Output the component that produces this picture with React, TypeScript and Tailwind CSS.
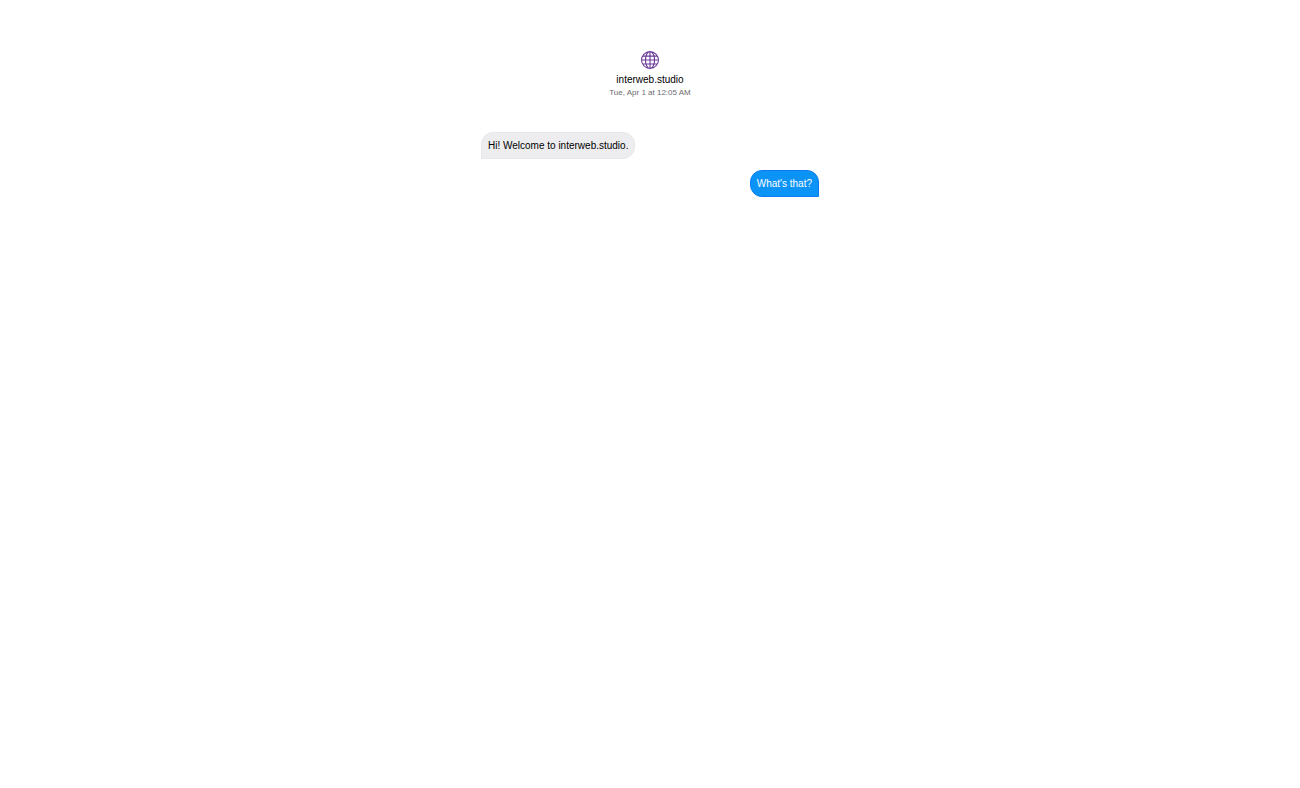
import { BsGlobe } from "react-icons/bs";

const messages = [
  { id: 1, text: "Hi! Welcome to interweb.studio.", mine: false },
  { id: 2, text: "What's that?", mine: true },
];

const Header = () => {
  return (
    <header className="flex flex-col items-center">
      <a href="/" aria-label="interweb.studio home" className="text-[#6a3a9b]">
        <BsGlobe size={18} />
      </a>
      <h1 className="mt-1 text-[10px] leading-3.5 text-black">interweb.studio</h1>
      <p className="text-[8px] leading-3 text-[#6b6b70]">Tue, Apr 1 at 12:05 AM</p>
    </header>
  );
};

const App = () => {
  return (
    <div className="min-h-screen bg-white pt-[51px] font-['Liberation_Sans',Arial,sans-serif]">
      <main className="mx-auto w-full max-w-[338px]">
        <Header />
        <div className="mt-[33px] flex flex-col gap-[11px]">
          {messages.map((message) => (
            <div
              key={message.id}
              className={
                message.mine
                  ? "self-end rounded-xl rounded-br-none border border-[#0a7cf0] bg-[#0b93f6] px-1.5 py-1 text-[10px] leading-[17px] text-white"
                  : "self-start rounded-xl rounded-bl-none border border-[#e8e8ec] bg-[#ededf0] px-1.5 py-1 text-[10px] leading-[17px] text-black"
              }
            >
              {message.text}
            </div>
          ))}
        </div>
      </main>
    </div>
  );
};

export default App;
